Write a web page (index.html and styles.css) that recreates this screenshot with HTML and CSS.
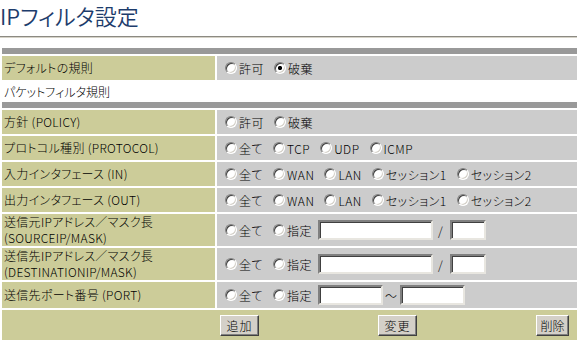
FILE: index.html
```html
<!DOCTYPE html>
<html lang="ja">
<head>
<meta charset="utf-8">
<title>IPフィルタ設定</title>
<link rel="stylesheet" href="styles.css">
</head>
<body>
<h1 class="title">IPフィルタ設定</h1>
<form class="form">
  <div class="bar"></div>

  <div class="label">デフォルトの規則</div>
  <div class="field">
    <label class="opt"><input type="radio" name="def">許可</label>
    <label class="opt"><input type="radio" name="def" checked>破棄</label>
  </div>

  <div class="section">パケットフィルタ規則</div>
  <div class="bar"></div>

  <div class="label">方針 (POLICY)</div>
  <div class="field">
    <label class="opt"><input type="radio" name="pol">許可</label>
    <label class="opt"><input type="radio" name="pol">破棄</label>
  </div>

  <div class="label">プロトコル種別 (PROTOCOL)</div>
  <div class="field">
    <label class="opt"><input type="radio" name="proto">全て</label>
    <label class="opt"><input type="radio" name="proto">TCP</label>
    <label class="opt"><input type="radio" name="proto">UDP</label>
    <label class="opt"><input type="radio" name="proto">ICMP</label>
  </div>

  <div class="label">入力インタフェース (IN)</div>
  <div class="field">
    <label class="opt"><input type="radio" name="in">全て</label>
    <label class="opt"><input type="radio" name="in">WAN</label>
    <label class="opt"><input type="radio" name="in">LAN</label>
    <label class="opt"><input type="radio" name="in">セッション1</label>
    <label class="opt"><input type="radio" name="in">セッション2</label>
  </div>

  <div class="label">出力インタフェース (OUT)</div>
  <div class="field">
    <label class="opt"><input type="radio" name="out">全て</label>
    <label class="opt"><input type="radio" name="out">WAN</label>
    <label class="opt"><input type="radio" name="out">LAN</label>
    <label class="opt"><input type="radio" name="out">セッション1</label>
    <label class="opt"><input type="radio" name="out">セッション2</label>
  </div>

  <div class="label">送信元IPアドレス／マスク長<br>(SOURCEIP/MASK)</div>
  <div class="field">
    <label class="opt"><input type="radio" name="src">全て</label>
    <label class="opt opt-spec"><input type="radio" name="src">指定</label>
    <input type="text" class="txt ip"><span class="slash">/</span><input type="text" class="txt mask">
  </div>

  <div class="label">送信先IPアドレス／マスク長<br>(DESTINATIONIP/MASK)</div>
  <div class="field">
    <label class="opt"><input type="radio" name="dst">全て</label>
    <label class="opt opt-spec"><input type="radio" name="dst">指定</label>
    <input type="text" class="txt ip"><span class="slash">/</span><input type="text" class="txt mask">
  </div>

  <div class="label">送信先ポート番号 (PORT)</div>
  <div class="field">
    <label class="opt"><input type="radio" name="port">全て</label>
    <label class="opt opt-spec"><input type="radio" name="port">指定</label>
    <input type="text" class="txt port"><span class="tilde">～</span><input type="text" class="txt port">
  </div>

  <div class="actions">
    <button type="button" class="btn btn-add">追加</button>
    <button type="button" class="btn btn-mod">変更</button>
    <button type="button" class="btn btn-del">削除</button>
  </div>
</form>
</body>
</html>
```
FILE: styles.css
```css
html, body {
  margin: 0;
  padding: 0;
  background: #fff;
}
body {
  width: 577px;
  height: 341px;
  overflow: hidden;
  font-family: "Noto Sans CJK JP", sans-serif;
  font-size: 12px;
  font-weight: 300;
  color: #000;
  font-feature-settings: "palt";
}
.title {
  margin: 0 0 9px;
  height: 36px;
  padding: 0;
  font-size: 22px;
  line-height: 30px;
  font-weight: 350;
  color: #1d3c6c;
  border-bottom: 1px solid #8c8a82;
  box-shadow: 0 1px 0 #d6d3c8;
}
.form {
  display: grid;
  grid-template-columns: 213px 361px;
  grid-template-rows: 6px 24px 18px 6px 24px 24px 24px 24px 32px 32px 26px 30px;
  gap: 2px;
  padding: 2px;
  margin: 0;
  width: max-content;
}
.bar {
  grid-column: 1 / -1;
  background: #999;
}
.label {
  background: #cccc99;
  display: flex;
  align-items: center;
  padding-left: 2px;
  line-height: 16px;
  white-space: nowrap;
  letter-spacing: 0.3px;
}
.section {
  grid-column: 1 / -1;
  background: #fff;
  display: flex;
  align-items: center;
  padding-left: 2px;
}
.field {
  background: #ccc;
  display: flex;
  align-items: center;
  padding-left: 8px;
  white-space: nowrap;
}
.opt {
  display: inline-flex;
  align-items: center;
  margin-right: 10px;
  letter-spacing: 0.5px;
}
.opt-spec {
  margin-right: 6px;
}
.opt input[type="radio"] {
  -webkit-appearance: none;
  appearance: none;
  box-sizing: border-box;
  width: 12px;
  height: 12px;
  margin: 0 2px 0 0;
  border-radius: 50%;
  border: 1px solid;
  border-color: #808080 #fff #fff #808080;
  box-shadow: inset 1px 1px 0 #404040, inset -1px -1px 0 #d4d0c8;
  background: #fff;
}
.opt input[type="radio"]:checked {
  background: radial-gradient(circle, #000 0 1.8px, #fff 2.4px);
}
.txt {
  box-sizing: border-box;
  height: 20px;
  margin: 0;
  padding: 1px 2px;
  border: 2px solid;
  border-color: #808080 #e8e6e0 #e8e6e0 #808080;
  box-shadow: inset 1px 1px 0 #404040;
  background: #fff;
  font: inherit;
}
.ip { width: 115px; }
.mask { width: 36px; }
.port { width: 65px; }
.slash {
  margin: 0 7px 0 5px;
}
.tilde {
  margin: 0 3px 0 2px;
}
.actions {
  grid-column: 1 / -1;
  background: #cccc99;
  display: grid;
  grid-template-columns: repeat(3, 1fr);
  align-items: center;
  padding: 0 3px 0 218px;
}
.btn {
  box-sizing: border-box;
  height: 21px;
  width: 39px;
  padding: 0;
  margin: 0;
  font: inherit;
  letter-spacing: 1px;
  color: #000;
  background: #d4d0c8;
  border: 1px solid;
  border-color: #fff #404040 #404040 #fff;
  box-shadow: inset -1px -1px 0 #808080;
}
.btn-add { justify-self: start; }
.btn-mod { justify-self: center; }
.btn-del { justify-self: end; width: 33px; margin-right: 6px; letter-spacing: 0; }
```
